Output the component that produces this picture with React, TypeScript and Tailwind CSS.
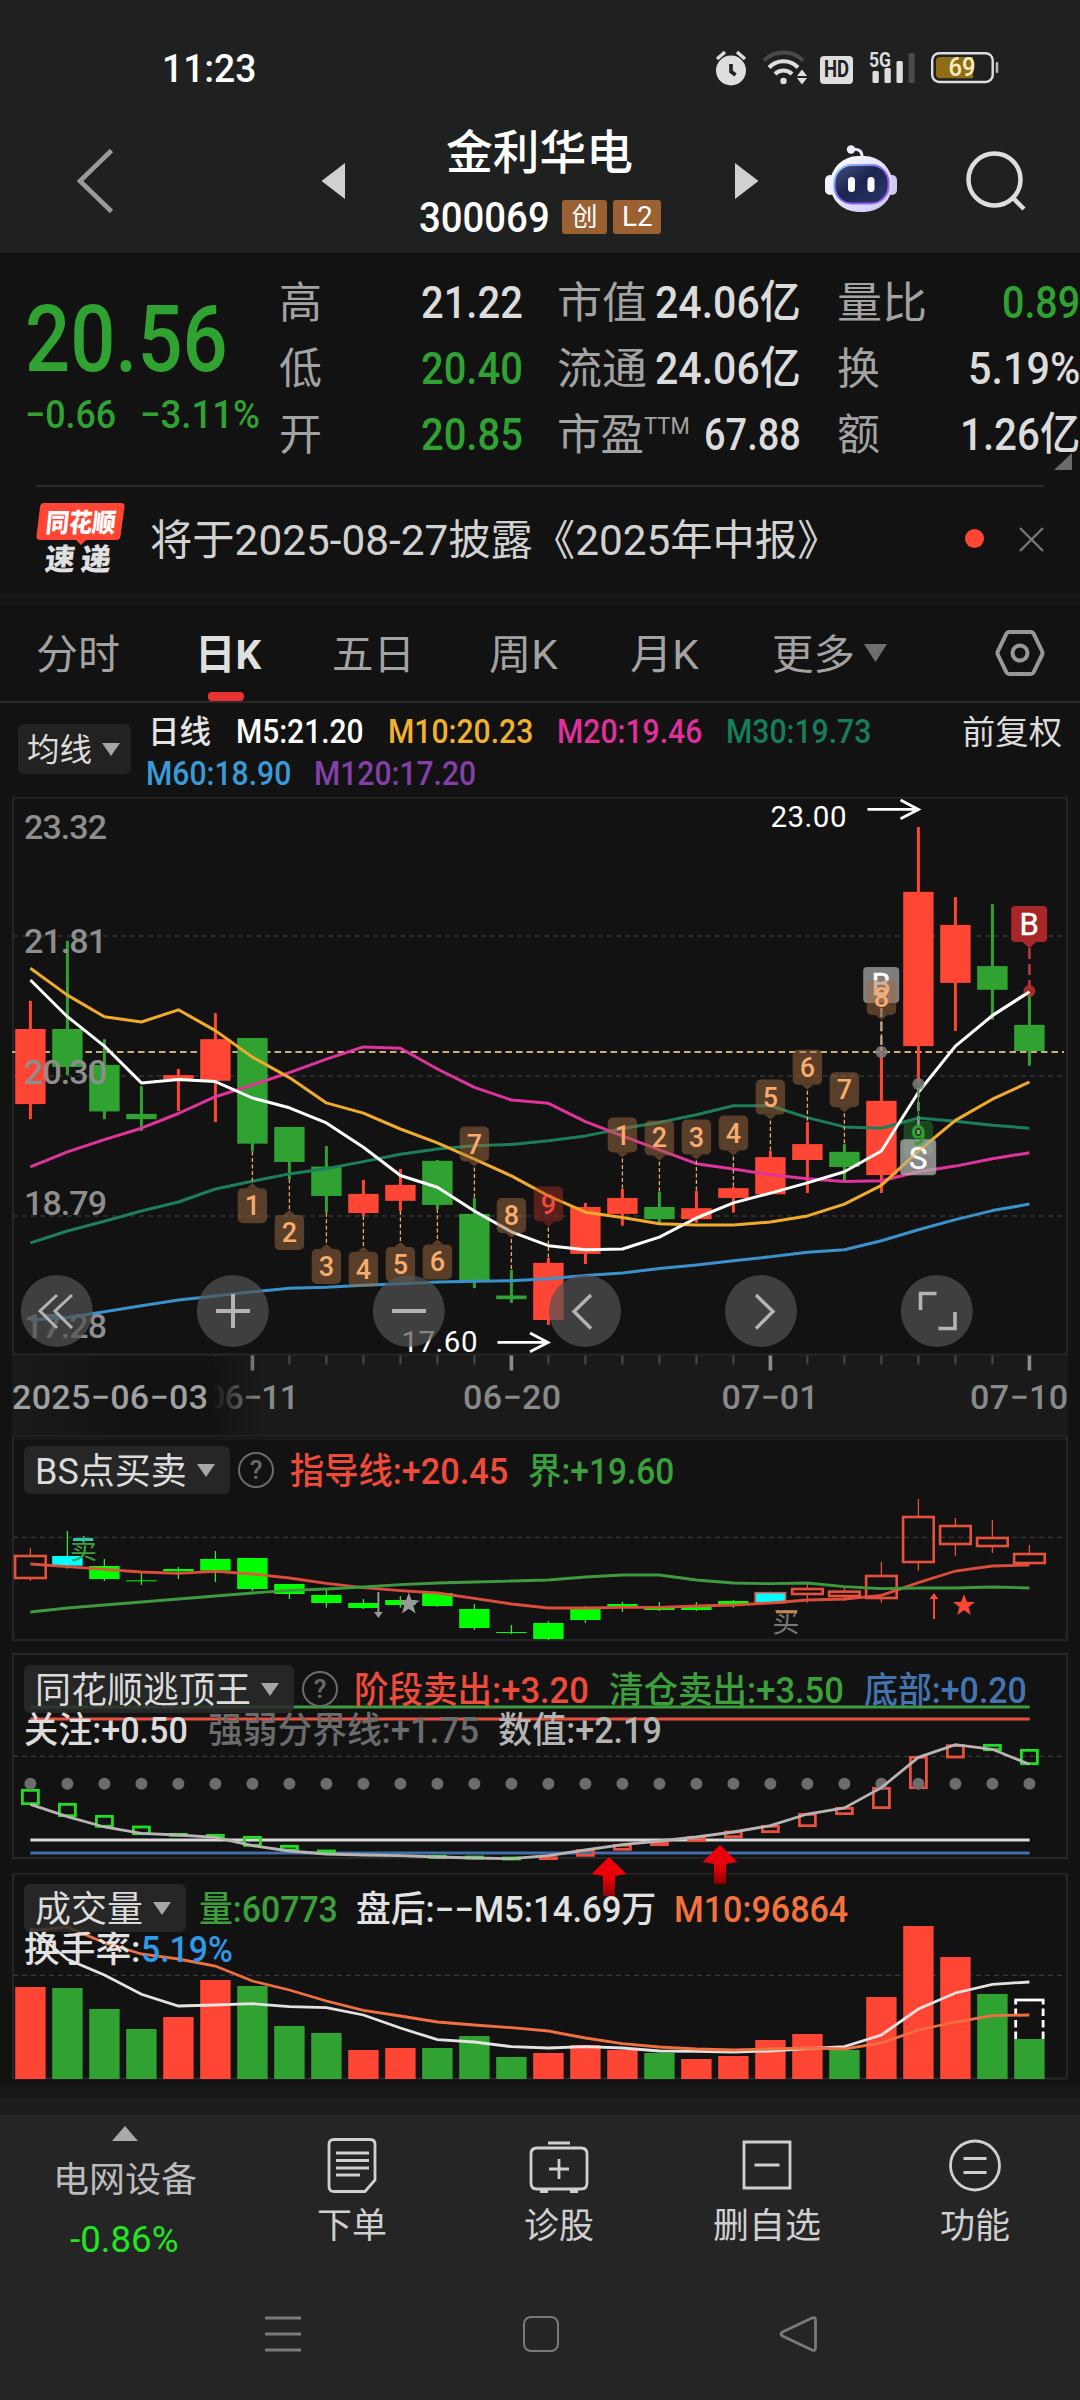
import { useLayoutEffect, useRef, useState, type ReactNode } from "react";

const RED = "#ff4634";
const GREEN = "#30a231";
const LIME = "#00ff00";

/* Text squeezed or stretched horizontally so that it fills the width of its box. */
function Fit({ className = "", children }: { className?: string; children: ReactNode }) {
  const outer = useRef<HTMLSpanElement>(null);
  const inner = useRef<HTMLSpanElement>(null);
  const [k, setK] = useState(1);
  useLayoutEffect(() => {
    if (outer.current && inner.current) setK(outer.current.offsetWidth / inner.current.offsetWidth);
  }, []);
  return (
    <span ref={outer} className={"block shrink-0 whitespace-nowrap " + className}>
      <span ref={inner} className="inline-block origin-left" style={{ transform: `scaleX(${k})` }}>
        {children}
      </span>
    </span>
  );
}

const cx = (i: number) => 30.4 + 37 * i;
const line = (ys: number[], f: (v: number) => number) => ys.map((v, i) => `${cx(i)},${f(v).toFixed(1)}`).join(" ");

/* ---------- header ---------- */

function StatusBar() {
  return (
    <div className="flex h-[86px] items-start pt-[50px] pl-[162px] text-white">
      <Fit className="w-[94px] text-[38px] leading-[38px] font-medium">11:23</Fit>
      <svg className="ml-[459px] h-[36px] w-[32px]" viewBox="715 51 32 36" fill="none">
        <circle cx="731" cy="71.5" r="15" fill="#dedede" />
        <path d="M717 60l8-7M745 60l-8-7" stroke="#dedede" strokeWidth="3.4" />
        <path d="M731 65v7.500l4.500 3.500" stroke="#1f2120" strokeWidth="3.600" />
      </svg>
      <svg className="ml-[15px] h-[36px] w-[46px]" viewBox="762 51 46 36" fill="none">
        <path d="M764 61.500a28 28 0 0 1 39 0" stroke="#484948" strokeWidth="4" />
        <path d="M769 68.500a20 20 0 0 1 29 0M775 75a12 12 0 0 1 17 0" stroke="#dedede" strokeWidth="4" />
        <circle cx="783.500" cy="82" r="3.200" fill="#dedede" />
        <path d="M802 70.500l5 6.500h-10zM802 85.500l5-6.500h-10z" fill="#dedede" />
      </svg>
      <span className="mt-[6px] ml-[12px] flex h-[28px] w-[33px] items-center justify-center rounded-[4px] bg-[#dedede] text-[#1f2120]">
        <Fit className="w-[25px] text-[23px] leading-[28px] font-bold">HD</Fit>
      </span>
      <svg className="ml-[15px] h-[36px] w-[48px] overflow-visible" viewBox="868 51 48 36">
        <text x="869" y="67.500" fontSize="21" fontWeight="700" fill="#dedede" textLength="22" lengthAdjust="spacingAndGlyphs">5G</text>
        <rect x="872.500" y="72" width="6.300" height="12" rx="1.500" fill="#dedede" />
        <rect x="884.500" y="69" width="6.300" height="15" rx="1.500" fill="#dedede" />
        <rect x="896.500" y="62" width="6.300" height="22" rx="1.500" fill="#dedede" />
        <rect x="908.500" y="54" width="6.300" height="30" rx="1.500" fill="#484948" />
      </svg>
      <svg className="ml-[14px] h-[36px] w-[70px]" viewBox="930 51 70 36" fill="none">
        <rect x="932.200" y="54.200" width="60.500" height="28.800" rx="7" stroke="#dedede" strokeWidth="2.400" />
        <path d="M940 58h33v21.300h-33a4 4 0 0 1-4-4v-13.300a4 4 0 0 1 4-4z" fill="#8f6d15" />
        <rect x="995.700" y="63" width="2.600" height="11" rx="1" fill="#b8b8b8" />
        <text x="948.500" y="77.300" fontSize="25" fontWeight="500" fill="#f7ecc4" textLength="27" lengthAdjust="spacingAndGlyphs">69</text>
      </svg>
    </div>
  );
}

function Robot() {
  return (
    <svg className="mt-[58px] h-[70px] w-[74px] overflow-visible" viewBox="824 143 74 70" fill="none">
      <defs>
        <linearGradient id="rb-shell" x1="0" y1="0" x2="1" y2="1">
          <stop offset="0" stopColor="#ffffff" />
          <stop offset="1" stopColor="#c9c5f2" />
        </linearGradient>
        <linearGradient id="rb-rim" x1="0" y1="0" x2="1" y2="1">
          <stop offset="0" stopColor="#8fe0ff" />
          <stop offset=".5" stopColor="#7a5cf0" />
          <stop offset="1" stopColor="#a060f0" />
        </linearGradient>
        <linearGradient id="rb-face" x1="0" y1="0" x2="1" y2="1">
          <stop offset="0" stopColor="#46507c" />
          <stop offset=".45" stopColor="#1c2550" />
          <stop offset="1" stopColor="#2c3668" />
        </linearGradient>
      </defs>
      <path d="M851 148.500q12-2 11 9" stroke="#e8e6fa" strokeWidth="3" />
      <circle cx="851" cy="148.500" r="4.200" fill="#eeedfb" />
      <rect x="825" y="174" width="10" height="20" rx="5" fill="#f3f2fd" />
      <rect x="887" y="174" width="10" height="20" rx="5" fill="#cfcbf0" />
      <rect x="830" y="155" width="62.500" height="56" rx="28" fill="url(#rb-shell)" />
      <rect x="834.500" y="164" width="54" height="38.500" rx="17.500" fill="url(#rb-face)" stroke="url(#rb-rim)" strokeWidth="2" />
      <rect x="848" y="176" width="7" height="15" rx="3.500" fill="#fff" />
      <rect x="867.500" y="176" width="7" height="15" rx="3.500" fill="#fff" />
    </svg>
  );
}

function TitleBar() {
  return (
    <div className="flex h-[167px] items-start">
      <svg className="mt-[62px] ml-[74px] h-[66px] w-[42px]" viewBox="74 148 42 66" fill="none">
        <path d="M111.500 150.500L80 181l31.500 30.500" stroke="#9a9a9a" strokeWidth="4.600" />
      </svg>
      <svg className="mt-[77px] ml-[205px] h-[36px] w-[24px]" viewBox="0 0 24 36">
        <path d="M24 0v36L.5 18z" fill="#d0d0d0" />
      </svg>
      <div className="ml-[74px] flex w-[243px] flex-col">
        <Fit className="mt-[41px] ml-[27px] w-[187px] text-[47px] leading-[52px] font-medium text-white">金利华电</Fit>
        <div className="mt-[16px] flex items-center">
          <Fit className="w-[131px] text-[43px] leading-[44px] font-medium text-white">300069</Fit>
          <span className="ml-[12px] flex h-[34px] w-[45px] items-center justify-center rounded-[3px] bg-[#9c6133] text-[26px] leading-[34px] text-white">创</span>
          <span className="ml-[6px] flex h-[34px] w-[48px] items-center justify-center rounded-[3px] bg-[#9c6133] text-white">
            <Fit className="w-[31px] text-[27px] leading-[34px]">L2</Fit>
          </span>
        </div>
      </div>
      <svg className="mt-[77px] ml-[73px] h-[36px] w-[24px]" viewBox="0 0 24 36">
        <path d="M0 0v36L23.500 18z" fill="#d0d0d0" />
      </svg>
      <div className="ml-[65px]">
        <Robot />
      </div>
      <svg className="mt-[62px] ml-[66px] h-[64px] w-[64px]" viewBox="964 148 64 64" fill="none" stroke="#dedede" strokeWidth="4.500">
        <circle cx="994.500" cy="179.500" r="26" />
        <path d="M1013 198l11 11" strokeWidth="4.500" />
      </svg>
    </div>
  );
}

/* ---------- quote ---------- */

function QuoteBlock() {
  const lab = "text-[43px] leading-[66px] text-[#a3a3a3]";
  const val = "text-[45px] leading-[66px] font-medium";
  return (
    <div className="flex h-[232px] items-start">
      <div className="w-[278px] pl-[25px] text-[#30a231]">
        <Fit className="mt-[46px] w-[203px] text-[92px] leading-[82px] font-medium">20.56</Fit>
        <div className="mt-[11px] flex">
          <Fit className="w-[91px] text-[39px] leading-[46px] font-medium">−0.66</Fit>
          <Fit className="ml-[24px] w-[120px] text-[39px] leading-[46px] font-medium">−3.11%</Fit>
        </div>
      </div>
      <div className="mt-[17px] flex w-[245px] justify-between">
        <div className={"flex flex-col pl-[1px] " + lab}>
          <span>高</span>
          <span>低</span>
          <span>开</span>
        </div>
        <div className={"flex flex-col " + val}>
          <Fit className="w-[102px] text-[#dcdcdc]">21.22</Fit>
          <Fit className="w-[102px] text-[#30a231]">20.40</Fit>
          <Fit className="w-[102px] text-[#30a231]">20.85</Fit>
        </div>
      </div>
      <div className="mt-[17px] ml-[34px] flex w-[244px] flex-col text-[#dcdcdc]">
        {["市值", "流通"].map((l) => (
          <div key={l} className="flex justify-between">
            <Fit className={"w-[90px] " + lab}>{l}</Fit>
            <Fit className={"w-[146px] " + val}>24.06亿</Fit>
          </div>
        ))}
        <div className="flex">
          <Fit className={"w-[87px] " + lab}>市盈</Fit>
          <Fit className="w-[46px] text-[23px] leading-[50px] text-[#a3a3a3]">TTM</Fit>
          <Fit className={"ml-[14px] w-[97px] " + val}>67.88</Fit>
        </div>
      </div>
      <div className="relative mt-[17px] ml-[36px] flex w-[243px] flex-col text-[#dcdcdc]">
        <div className="flex justify-between">
          <Fit className={"w-[90px] " + lab}>量比</Fit>
          <Fit className={"w-[78px] text-[#30a231] " + val}>0.89</Fit>
        </div>
        <div className="flex justify-between">
          <span className={lab}>换</span>
          <Fit className={"w-[112px] " + val}>5.19%</Fit>
        </div>
        <div className="flex justify-between">
          <span className={lab}>额</span>
          <Fit className={"w-[120px] " + val}>1.26亿</Fit>
        </div>
        <svg className="absolute top-[183px] left-[217px] h-[18px] w-[18px]" viewBox="0 0 18 18">
          <path d="M18 0v17H0z" fill="#6a6a6a" />
        </svg>
      </div>
    </div>
  );
}

function NewsRow() {
  return (
    <div className="mx-[36px] flex h-[108px] items-start border-t-2 border-[#2a2a2a]">
      <div className="mt-[16px] h-[74px] w-[90px]">
        <div className="relative h-[36px] w-[88px]">
          <svg className="absolute inset-0 h-[44px] w-[90px]" viewBox="0 0 90 44">
            <path d="M8 0h77q4 0 3.500 4l-4 29q-.5 4-4 4H50l-5 5-5-5H4q-4 0-3.500-4L4 4q.5-4 4-4z" fill="#ff4634" />
          </svg>
          <Fit className="relative ml-[10px] w-[70px] -skew-x-6 pt-[2px] text-[26px] leading-[36px] font-black text-white">同花顺</Fit>
        </div>
        <div className="mt-[6px] ml-[9px] flex -skew-x-6 gap-[6px] text-[30px] leading-[30px] font-black text-[#e0e0e0]">
          <span>速</span>
          <span>递</span>
        </div>
      </div>
      <Fit className="mt-[25px] ml-[24px] w-[689px] text-[42px] leading-[58px] text-[#d2d2d2]">将于2025-08-27披露《2025年中报》</Fit>
      <span className="mt-[42px] ml-[126px] size-[19px] rounded-full bg-[#ff4634]" />
      <svg className="mt-[40px] ml-[35px] size-[25px]" viewBox="0 0 25 25">
        <path d="M1 1l23 23M24 1L1 24" stroke="#777" strokeWidth="2.400" />
      </svg>
    </div>
  );
}

/* ---------- tabs and legend ---------- */

function Tabs() {
  return (
    <div className="flex h-[98px] border-b-2 border-[#2a2a2a] pt-[21px] text-[41px] leading-[58px] text-[#a3a3a3]">
      <Fit className="ml-[36px] w-[84px]">分时</Fit>
      <div className="relative ml-[75px] w-[68px]">
        <Fit className="w-[66px] font-bold text-[#e0e0e0]">日K</Fit>
        <span className="absolute top-[66px] left-[13px] h-[9px] w-[36px] rounded-[4px] bg-[#e73232]" />
      </div>
      <Fit className="ml-[69px] w-[83px]">五日</Fit>
      <Fit className="ml-[74px] w-[69px]">周K</Fit>
      <Fit className="ml-[72px] w-[69px]">月K</Fit>
      <Fit className="ml-[73px] w-[83px]">更多</Fit>
      <svg className="mt-[18px] ml-[9px] h-[18px] w-[23px]" viewBox="0 0 23 18">
        <path d="M0 0h23L11.500 18z" fill="#6e6e6e" />
      </svg>
      <svg className="mt-[2px] ml-[108px] h-[50px] w-[50px]" viewBox="0 0 50 50" fill="none" stroke="#989898" strokeWidth="4">
        <path d="M14.500 4h21q2 0 3 1.500L47 23q1 2 0 4l-8.500 17.500q-1 1.500-3 1.500h-21q-2 0-3-1.500L3 27q-1-2 0-4l8.500-17.500q1-1.500 3-1.500z" />
        <circle cx="25" cy="25" r="7.500" />
      </svg>
    </div>
  );
}

function Caret({ className = "" }: { className?: string }) {
  return (
    <svg className={"h-[13px] w-[18px] shrink-0 " + className} viewBox="0 0 18 13">
      <path d="M0 0h18L9 13z" fill="#a6a6a6" />
    </svg>
  );
}

function Legend() {
  return (
    <div className="flex h-[94px] text-[33px] leading-[42px] font-medium">
      <div className="mt-[21px] ml-[18px] flex h-[50px] w-[113px] items-center rounded-[6px] bg-[#222222]">
        <Fit className="ml-[9px] w-[65px] translate-y-px text-[32px] leading-[50px] font-normal text-[#dcdcdc]">均线</Fit>
        <Caret className="ml-[10px]" />
      </div>
      <div className="mt-[8px] ml-[15px] w-[818px]">
        <div className="flex">
          <Fit className="ml-[2px] w-[63px] text-[32px] text-[#e4e4e4]">日线</Fit>
          <Fit className="ml-[25px] w-[128px] text-white">M5:21.20</Fit>
          <Fit className="ml-[24px] w-[145px] text-[#f2b02f]">M10:20.23</Fit>
          <Fit className="ml-[24px] w-[145px] text-[#e0309c]">M20:19.46</Fit>
          <Fit className="ml-[24px] w-[145px] text-[#157f5a]">M30:19.73</Fit>
        </div>
        <div className="flex">
          <Fit className="w-[145px] text-[#3a9bd8]">M60:18.90</Fit>
          <Fit className="ml-[23px] w-[162px] text-[#8440a8]">M120:17.20</Fit>
        </div>
      </div>
      <Fit className="mt-[9px] ml-[-2px] w-[100px] text-[33px] font-normal text-[#dcdcdc]">前复权</Fit>
    </div>
  );
}

/* ---------- main candle chart ---------- */

const ky = (v: number) => 780 + v / 2.45;

const candles: [string, number, number, number, number][] = [
  ["R", 541, 610, 794, 831], ["G", 394, 610, 703, 723], ["G", 635, 698, 812, 831], ["G", 750, 818, 831, 860],
  ["R", 708, 723, 733, 811], ["R", 571, 635, 737, 838], ["G", 632, 632, 891, 910], ["G", 850, 850, 936, 978],
  ["G", 897, 947, 1019, 1060], ["R", 980, 1014, 1061, 1068], ["R", 953, 992, 1031, 1056], ["G", 931, 933, 1041, 1051],
  ["G", 1024, 1063, 1225, 1245], ["G", 1200, 1263, 1272, 1281], ["R", 1171, 1183, 1323, 1335], ["R", 1036, 1046, 1161, 1186],
  ["R", 1002, 1024, 1063, 1092], ["G", 1009, 1046, 1076, 1088], ["R", 1007, 1049, 1076, 1085], ["R", 997, 1000, 1024, 1060],
  ["R", 909, 924, 1015, 1015], ["R", 838, 892, 931, 1012], ["G", 892, 911, 948, 980], ["R", 666, 786, 968, 1012],
  ["R", 115, 274, 652, 745], ["R", 287, 355, 497, 615], ["G", 304, 456, 514, 587], ["G", 519, 600, 664, 700],
];

const averages: [string, number[]][] = [
  ["#3a92cc", [1323, 1317, 1303, 1288, 1274, 1264, 1254, 1245, 1243, 1238, 1234, 1230, 1228, 1227, 1222, 1214, 1208, 1197, 1188, 1178, 1168, 1157, 1151, 1129, 1102, 1077, 1055, 1039]],
  ["#1b7f5c", [1134, 1105, 1081, 1056, 1034, 1002, 983, 965, 952, 935, 917, 904, 896, 893, 884, 872, 854, 839, 820, 798, 798, 827, 850, 853, 828, 836, 846, 853]],
  ["#e0339c", [948, 911, 881, 853, 817, 776, 747, 717, 684, 654, 657, 708, 753, 784, 792, 837, 872, 906, 940, 953, 967, 977, 984, 982, 960, 946, 928, 913]],
  ["#f0ab2a", [461, 527, 580, 593, 563, 614, 679, 729, 791, 816, 855, 889, 929, 970, 1019, 1059, 1072, 1087, 1090, 1090, 1083, 1068, 1039, 993, 909, 834, 782, 740]],
  ["#ffffff", [490, 580, 652, 742, 734, 739, 779, 803, 840, 900, 969, 998, 1056, 1107, 1141, 1151, 1149, 1120, 1073, 1036, 1012, 987, 960, 909, 765, 652, 577, 519]],
];

/* [index, label, top of the tag, tag sits below its candle] */
const tags: [number, string, number, boolean][] = [
  [6, "1", 1000, true], [7, "2", 1066, true], [8, "3", 1149, true], [9, "4", 1156, true], [10, "5", 1144, true], [11, "6", 1138, true],
  [12, "7", 849, false], [13, "8", 1024, false], [14, "9", 996, false], [16, "1", 827, false], [17, "2", 834, false], [18, "3", 832, false],
  [19, "4", 822, false], [20, "5", 734, false], [21, "6", 661, false], [22, "7", 716, false],
];

function Tag({ i, label, top, below }: { i: number; label: string; top: number; below: boolean }) {
  const y = ky(top);
  const x = cx(i);
  const red = i === 14;
  const [, hi, , , lo] = candles[i];
  const tip = below ? `M${x - 6} ${y}l6-5 6 5z` : `M${x - 6} ${y + 35}l6 5 6-5z`;
  return (
    <g>
      <line x1={x} x2={x} y1={below ? ky(lo) : y + 41} y2={below ? y - 5 : ky(hi)} stroke="#f0a868" strokeWidth="1.300" strokeDasharray="4 2.500" />
      <g fill={red ? "#a02c22" : "#a06a40"} opacity=".5">
        <rect x={x - 14.700} y={y} width="29.400" height="35" rx="5" />
        <path d={tip} />
      </g>
      <text x={x} y={y + 27} fontSize="27" fontWeight="500" textAnchor="middle" fill={red ? "#f2483a" : "#faac6c"}>{label}</text>
    </g>
  );
}

function Flag({ i, label, top, base, fill, opacity }: { i: number; label: string; top: number; base: number; fill: string; opacity: number }) {
  const x = cx(i) - 0.2;
  const y = ky(top);
  return (
    <g>
      <rect x={x - 18} y={y} width="36" height="36" rx="4" fill={fill} opacity={opacity} />
      <text x={x} y={y + base} fontSize="31" textAnchor="middle" fill="#fff" stroke="#fff" strokeWidth=".4">{label}</text>
    </g>
  );
}

function MainChart() {
  const bigTick = [6, 13, 20, 27];
  return (
    <svg className="block h-[638px] w-[1080px]" viewBox="0 797 1080 638" fill="none">
      <defs>
        <linearGradient id="date-fade" x1="0" x2="1" y1="0" y2="0">
          <stop offset="0" stopColor="#1a1a1a" />
          <stop offset=".45" stopColor="#121212" />
          <stop offset=".8" stopColor="#121212" />
          <stop offset="1" stopColor="#121212" stopOpacity="0" />
        </linearGradient>
      </defs>
      <rect x="12" y="1355" width="1056" height="80" fill="#1a1a1a" />
      <rect x="13" y="797.500" width="1054" height="557" stroke="#262626" strokeWidth="2" />
      {[936, 1076, 1216].map((y) => (
        <line key={y} x1="13" x2="1066" y1={y} y2={y} stroke="#2b2b2b" strokeWidth="2" strokeDasharray="5 4" />
      ))}
      <line x1="12" x2="1064" y1="1052" y2="1052" stroke="#d0ae7c" strokeWidth="2" strokeDasharray="6.500 4" />

      {candles.map(([c, hi, t, b, lo], i) => (
        <g key={i} fill={c === "R" ? RED : GREEN}>
          <rect x={cx(i) - 1.500} y={ky(hi)} width="3" height={ky(lo) - ky(hi)} />
          <rect x={cx(i) - 15.200} y={ky(t)} width="30.400" height={Math.max(3, ky(b) - ky(t))} />
        </g>
      ))}

      <g fontSize="34" fontWeight="500" fill="#8e8e8e">
        {([["23.32", 839], ["21.81", 953], ["20.30", 1084], ["18.79", 1215], ["17.28", 1338]] as [string, number][]).map(([s, y]) => (
          <text key={s} x="24" y={y} textLength="83">{s}</text>
        ))}
      </g>

      {averages.map(([c, ys]) => (
        <polyline key={c} points={line(ys, ky)} stroke={c} strokeWidth="3" strokeLinejoin="round" />
      ))}

      {tags.map(([i, l, t, b]) => (
        <Tag key={i} i={i} label={l} top={t} below={b} />
      ))}

      <g fill="#7d7d7d">
        <circle cx={cx(23)} cy="1052" r="6" opacity=".85" />
        <circle cx={cx(24)} cy="1084" r="6" opacity=".85" />
      </g>
      <line x1={cx(23)} x2={cx(23)} y1="1008" y2="1048" stroke="#9c9c9c" strokeWidth="2.500" strokeDasharray="9 5" />
      <Flag i={23} label="B" top={458} base={28.5} fill="#9a9a9a" opacity={0.8} />
      <Tag i={23} label="8" top={490} below={false} />

      <rect x={cx(24) - 14.700} y="1121" width="29.400" height="35" rx="5" fill="#2a9a32" opacity=".4" />
      <line x1={cx(24)} x2={cx(24)} y1="1088" y2="1134" stroke="#9c9c9c" strokeWidth="2.500" strokeDasharray="9 5" />
      <line x1={cx(24)} x2={cx(24)} y1="1086" y2="1120" stroke="#30a231" strokeWidth="1.300" />
      <Flag i={24} label="S" top={880} base={29.5} fill="#b0b0b0" opacity={0.75} />
      <text x={cx(24)} y="1145" fontSize="27" fontWeight="500" textAnchor="middle" fill="#30a231">9</text>
      <polyline points={line(averages[3][1], ky)} stroke="#f0ab2a" strokeWidth="2" opacity=".5" />

      <line x1={cx(27)} x2={cx(27)} y1="948" y2="988" stroke="#c0393a" strokeWidth="2.500" strokeDasharray="11 5" />
      <circle cx={cx(27)} cy="991" r="6" fill="#c0302f" opacity=".85" />
      <path d={`M${cx(27) - 7} 942l7 6 7-6z`} fill="#a82628" />
      <Flag i={27} label="B" top={309} base={29} fill="#a82628" opacity={1} />
      <path d={`M${cx(26)} ${ky(577)}L${cx(27)} ${ky(519)}`} stroke="#fff" strokeWidth="2.800" />

      <g fill="#fff" fontSize="29.500">
        <text x="770.500" y="826.500" textLength="76">23.00</text>
        <text x="401.500" y="1352" textLength="76">17.60</text>
      </g>
      <path d="M867.500 809.400H917M900.500 800l18 9.400-18 9.400M497.500 1342.400H547M530 1333l18 9.400-18 9.400" stroke="#fff" strokeWidth="2.800" />

      <g fill="#525252" opacity=".7">
        {[56.8, 232.8, 408.8, 585, 761, 936.8].map((x) => (
          <circle key={x} cx={x} cy="1311" r="36" />
        ))}
      </g>
      <g stroke="#b4b4b4" strokeWidth="3">
        <path d="M57 1295l-17 16 17 17M72 1295l-17 16 17 17" />
        <path d="M216 1311h34M233 1294v34" strokeWidth="4" />
        <path d="M392 1311h34" strokeWidth="4" />
        <path d="M591 1295l-17 16.500 17 17M756 1295l17 16.500-17 17" strokeWidth="3.400" />
        <path d="M920.500 1310v-16.500h16M955 1312v16.500h-16.500" strokeWidth="3.600" />
      </g>

      {Array.from({ length: 23 }, (_, n) => n + 5).map((i) => (
        <rect key={i} x={cx(i) - (bigTick.includes(i) ? 1.800 : 1)} y="1355.500" width={bigTick.includes(i) ? 3.600 : 2} height={bigTick.includes(i) ? 15 : 9} fill={bigTick.includes(i) ? "#8c8c8c" : "#4a4a4a"} />
      ))}
      <g fontSize="34" fontWeight="500" fill="#8a8a8a">
        <text x="206" y="1408.500" textLength="93">06−11</text>
        <text x="463" y="1408.500" textLength="98">06−20</text>
        <text x="721.500" y="1408.500" textLength="97">07−01</text>
        <text x="970" y="1408.500" textLength="98">07−10</text>
      </g>
      <rect x="12" y="1356" width="250" height="79" fill="url(#date-fade)" />
      <text x="12" y="1408.500" fontSize="34" fontWeight="500" fill="#a0a0a0" textLength="196">2025−06−03</text>
    </svg>
  );
}

/* ---------- indicator panels ---------- */

const sy = (v: number) => 1420 + v / 3;
const vy = (v: number) => 1860 + v / 3;

function Selector({ width, children }: { width: string; children: ReactNode }) {
  return (
    <div className={"flex h-[48px] shrink-0 items-center rounded-[6px] bg-[#2a2a2a]/85 pr-[15px] pl-[11px] text-[#dcdcdc] " + width}>
      {children}
      <Caret className="ml-auto" />
    </div>
  );
}

function Help() {
  return (
    <span className="ml-[8px] flex size-[36px] shrink-0 items-center justify-center rounded-full border-[2.5px] border-[#6b6b6b] text-[26px] leading-none text-[#6b6b6b]">?</span>
  );
}

function Frame({ y, h, mid }: { y: number; h: number; mid: number }) {
  return (
    <>
      <rect x="13" y={y} width="1054" height={h} stroke="#262626" strokeWidth="2" />
      <line x1="13" x2="1066" y1={mid} y2={mid} stroke="#3a3a3a" strokeWidth="1.200" strokeDasharray="5 4" />
    </>
  );
}

/* H hollow red, C cyan, G lime, E cyan with a red edge */
const bsCandles: [string, number, number, number, number][] = [
  ["H", 384, 405, 474, 483], ["C", 333, 408, 437, 446], ["G", 417, 438, 477, 483], ["G", 459, 481, 484, 495],
  ["G", 441, 447, 454, 477], ["G", 393, 417, 452, 486], ["G", 414, 414, 507, 513], ["G", 492, 492, 522, 537],
  ["G", 510, 525, 549, 563], ["G", 537, 549, 564, 567], ["G", 528, 540, 555, 563], ["G", 519, 519, 558, 561],
  ["G", 552, 567, 624, 630], ["G", 615, 636, 639, 642], ["G", 603, 609, 657, 660], ["G", 558, 567, 600, 609],
  ["G", 545, 552, 560, 576], ["G", 546, 563, 570, 573], ["G", 546, 561, 570, 573], ["G", 540, 543, 552, 563],
  ["E", 515, 515, 548, 548], ["H", 492, 504, 522, 548], ["H", 505, 512, 528, 543], ["H", 426, 465, 534, 548],
  ["H", 237, 288, 426, 452], ["H", 294, 315, 372, 407], ["H", 300, 351, 378, 399], ["H", 375, 399, 429, 429],
];
const guide = [432, 440, 448, 456, 460, 454, 462, 474, 490, 503, 512, 519, 535, 552, 564, 564, 562, 562, 558, 555, 549, 540, 537, 526, 488, 453, 438, 435];
const border = [576, 564, 555, 546, 537, 528, 519, 511, 507, 501, 494, 489, 486, 483, 480, 471, 465, 465, 480, 489, 491, 489, 500, 506, 504, 504, 501, 504];
const STAR = "M0-11.500L2.800-3.700 11-3.600 4.500 1.500 6.800 9.500 0 4.800-6.800 9.500-4.500 1.500-11-3.600-2.800-3.700z";

function BsPanel() {
  return (
    <div className="relative h-[219px] pt-[11px]">
      <svg className="absolute inset-0 h-[219px] w-[1080px]" viewBox="0 1435 1080 219" fill="none">
        <rect x="12" y="1435" width="1056" height="5" fill="#191919" />
        <Frame y={1435} h={205} mid={1537.3} />
        {bsCandles.map(([c, hi, t, b, lo], i) => {
          const hollow = c === "H";
          return (
            <g key={i}>
              <path
                d={hollow ? `M${cx(i)} ${sy(hi)}V${sy(t)}M${cx(i)} ${sy(b)}V${sy(lo)}` : `M${cx(i)} ${sy(hi)}V${sy(lo)}`}
                stroke={hollow ? "#e8503e" : "#3fe03f"}
                strokeWidth="1.300"
              />
              {hollow || c === "E" ? (
                <rect x={cx(i) - 15.300} y={sy(t) + 1} width="30.600" height={(b - t) / 3 - 1} fill={hollow ? "none" : "#00ffff"} stroke="#e8503e" strokeWidth={hollow ? 2.600 : 1.500} />
              ) : (
                <rect x={cx(i) - 15.200} y={sy(t)} width="30.400" height={(b - t) / 3} fill={c === "C" ? "#00ffff" : LIME} />
              )}
            </g>
          );
        })}
        <polyline points={line(guide, sy)} stroke="#e8503e" strokeWidth="2.800" opacity=".95" />
        <polyline points={line(border, sy)} stroke="#3f9a3f" strokeWidth="2.800" />
        <text x="70" y="1559" fontSize="27" fill="#3f9f3f">卖</text>
        <path d="M73 1539.500h20" stroke="#27c7b0" strokeWidth="3" />
        <g stroke="#999" strokeWidth="2">
          <path d="M378.400 1592v22" />
          <path d="M374 1612l4.400 6 4.400-6z" fill="#999" strokeWidth="0" />
        </g>
        <path d={STAR} transform="translate(408.800 1604)" fill="#999" />
        <text x="772.500" y="1632" fontSize="27" fill="#777">买</text>
        <path d="M776 1612h21" stroke="#c98840" strokeWidth="2.600" />
        <path d="M934 1619v-22" stroke={RED} strokeWidth="2" />
        <path d="M929.600 1599l4.400-6 4.400 6z" fill={RED} />
        <path d={STAR} transform="translate(964 1605.500)" fill={RED} />
      </svg>
      <div className="relative flex items-center pl-[24px] text-[36px] leading-[48px] font-medium">
        <Selector width="w-[206px]">
          <Fit className="w-[152px] translate-y-[1.5px] font-normal">BS点买卖</Fit>
        </Selector>
        <Help />
        <Fit className="ml-[16px] w-[218px] translate-y-[1.5px] text-[#f04b3a]">指导线:+20.45</Fit>
        <Fit className="ml-[20px] w-[146px] translate-y-[1.5px] text-[#3ba03a]">界:+19.60</Fit>
      </div>
    </div>
  );
}

const topCurve = [1153, 1190, 1221, 1240, 1245, 1252, 1277, 1293, 1302, 1305, 1307, 1311, 1314, 1316, 1307, 1290, 1274, 1263, 1251, 1236, 1217, 1182, 1164, 1103, 1012, 974, 988, 1033];
/* [index, top, bottom, rising] */
const topBoxes: [number, number, number, boolean][] = [
  [0, 1108, 1154, false], [1, 1150, 1190, false], [2, 1186, 1222, false], [3, 1218, 1244, false], [4, 1240, 1247, false], [5, 1243, 1252, false],
  [6, 1249, 1279, false], [7, 1276, 1293, false], [8, 1290, 1302, false], [11, 1306, 1312, false], [12, 1308, 1315, false], [13, 1311, 1316, false],
  [14, 1310, 1318, true], [15, 1289, 1309, true], [16, 1273, 1291, true], [17, 1264, 1277, true], [18, 1249, 1265, true], [19, 1233, 1253, true],
  [20, 1216, 1238, true], [21, 1180, 1220, true], [22, 1162, 1184, true], [23, 1102, 1166, true], [24, 1009, 1106, true], [25, 974, 1014, true],
  [26, 973, 992, false], [27, 988, 1034, false],
];

function TopPanel() {
  return (
    <div className="relative z-10 h-[219px] pt-[11px]">
      <svg className="absolute inset-0 h-[219px] w-[1080px] overflow-visible" viewBox="0 1654 1080 219" fill="none">
        <defs>
          <linearGradient id="buy-arrow" x1="0" x2="0" y1="0" y2="1">
            <stop offset="0" stopColor="#f00008" />
            <stop offset=".55" stopColor="#e80008" />
            <stop offset="1" stopColor="#900000" />
          </linearGradient>
        </defs>
        <Frame y={1654} h={204} mid={1756.3} />
        <g strokeWidth="3.200">
          <path d="M30.400 1707H1029.700" stroke="#3f9a3f" />
          <path d="M30.400 1719H1029.700" stroke="#e8503e" />
          <path d="M30.400 1840H1029.700" stroke="#d8d8d8" />
          <path d="M30.400 1853H1029.700" stroke="#3f6ea8" />
        </g>
        {topBoxes.map(([i, t, b, up]) => (
          <rect key={i} x={cx(i) - 8} y={sy(t) + 1} width="16" height={Math.max(1, (b - t) / 3 - 2)} stroke={up ? "#e8503e" : "#22dd22"} strokeWidth="2.800" />
        ))}
        {topCurve.map((_, i) => (
          <circle key={i} cx={cx(i)} cy="1783.700" r="6" fill="#6c6c6c" />
        ))}
        <polyline points={line(topCurve, sy)} stroke="#b8b4b4" strokeWidth="2.800" />
        {[[609, 1857], [720, 1845]].map(([x, y]) => (
          <path key={x} d={`M${x} ${y}l17.500 17-11.500 2v20h-12v-20L${x - 17.5} ${y + 17}z`} fill="url(#buy-arrow)" />
        ))}
      </svg>
      <div className="relative flex items-center pl-[24px] text-[36px] leading-[48px] font-medium">
        <Selector width="w-[270px]">
          <Fit className="w-[216px] translate-y-[1.5px] font-normal">同花顺逃顶王</Fit>
        </Selector>
        <Help />
        <Fit className="ml-[16px] w-[235px] translate-y-[1.5px] text-[#f04b3a]">阶段卖出:+3.20</Fit>
        <Fit className="ml-[20px] w-[235px] translate-y-[1.5px] text-[#3ba03a]">清仓卖出:+3.50</Fit>
        <Fit className="ml-[20px] w-[163px] translate-y-[1.5px] text-[#4474b0]">底部:+0.20</Fit>
      </div>
      <div className="relative -mt-[6px] flex pl-[24px] text-[36px] leading-[48px] font-medium">
        <Fit className="w-[164px] text-[#dcdcdc]">关注:+0.50</Fit>
        <Fit className="ml-[20px] w-[271px] text-[#6b6b6b]">强弱分界线:+1.75</Fit>
        <Fit className="ml-[19px] w-[164px] text-[#b4b4b4]">数值:+2.19</Fit>
      </div>
    </div>
  );
}

const volume: [number, string][] = [
  [381, "R"], [384, "G"], [447, "G"], [507, "G"], [471, "R"], [360, "R"], [378, "G"], [498, "G"], [519, "G"], [570, "R"],
  [564, "R"], [564, "G"], [528, "G"], [591, "G"], [579, "R"], [555, "R"], [570, "R"], [579, "G"], [597, "R"], [588, "R"],
  [540, "R"], [522, "R"], [570, "G"], [411, "R"], [198, "R"], [291, "R"], [402, "G"], [537, "G"],
];
const vol5 = [205, 298, 345, 403, 438, 435, 431, 440, 443, 465, 504, 539, 546, 560, 564, 560, 564, 573, 574, 576, 573, 566, 560, 525, 447, 399, 373, 366];
const vol10 = [212, 201, 248, 282, 297, 318, 363, 390, 423, 451, 468, 486, 495, 503, 513, 534, 551, 561, 567, 570, 567, 564, 567, 549, 510, 486, 467, 465];

function VolumePanel() {
  return (
    <div className="relative h-[213px] pt-[11px]">
      <svg className="absolute inset-0 h-[213px] w-[1080px]" viewBox="0 1873 1080 213" fill="none">
        <Frame y={1873.5} h={205} mid={1975.3} />
        {volume.map(([t, c], i) => (
          <rect key={i} x={cx(i) - 15.200} y={vy(t)} width="30.400" height={(657 - t) / 3} fill={c === "R" ? RED : GREEN} />
        ))}
        <path d={`M${cx(27) - 13.7} 2039v-39M${cx(27) + 13.7} 2039v-39`} stroke="#fff" strokeWidth="2.800" strokeDasharray="7.500 4" />
        <path d={`M${cx(27) - 15} 2000h30`} stroke="#fff" strokeWidth="2.800" />
        <polyline points={line(vol5, vy)} stroke="#e6e2e2" strokeWidth="2.800" />
        <polyline points={line(vol10, vy)} stroke="#f07040" strokeWidth="2.800" />
      </svg>
      <div className="relative z-20 flex items-center pl-[24px] text-[36px] leading-[48px] font-medium">
        <Selector width="w-[162px]">
          <Fit className="w-[108px] translate-y-[1.5px] font-normal">成交量</Fit>
        </Selector>
        <Fit className="ml-[13px] w-[139px] translate-y-[1.5px] text-[#3ba03a]">量:60773</Fit>
        <Fit className="ml-[18px] w-[300px] translate-y-[1.5px] text-[#e2e2e2]">盘后:−−M5:14.69万</Fit>
        <Fit className="ml-[18px] w-[174px] translate-y-[1.5px] text-[#f5723c]">M10:96864</Fit>
      </div>
      <div className="relative -mt-[6px] flex pl-[24px] text-[36px] leading-[48px] font-medium">
        <Fit className="w-[117px] text-[#e2e2e2]">换手率:</Fit>
        <Fit className="w-[92px] text-[#2f9ae6]">5.19%</Fit>
      </div>
    </div>
  );
}

/* ---------- bottom ---------- */

function BottomBar() {
  const label = "mt-[10px] text-[35px] leading-[44px] text-[#d0d0d0]";
  return (
    <div className="flex h-[165px] bg-[#252525]">
      <div className="flex w-[250px] flex-col items-center pt-[11px]">
        <svg className="h-[15px] w-[26px]" viewBox="0 0 26 15">
          <path d="M13 0l13 15H0z" fill="#aaaaaa" />
        </svg>
        <Fit className="mt-[16px] -ml-[1px] w-[144px] text-[35px] leading-[48px] text-[#bcbcbc]">电网设备</Fit>
        <Fit className="mt-[11px] -ml-[2px] w-[109px] text-[36px] leading-[48px] text-[#22e622]">-0.86%</Fit>
      </div>
      <div className="flex w-[204px] flex-col items-center pt-[22px]">
        <svg className="h-[58px] w-[52px]" viewBox="0 0 52 58" fill="none" stroke="#d0d0d0" strokeWidth="2.800">
          <path d="M8 2.500h36q5 0 5 5V43L39 54.500H8q-5 0-5-5v-42q0-5 5-5z" />
          <path d="M10 16h33M10 23.500h33M10 31h33M10 38h24" strokeWidth="3" />
        </svg>
        <span className={label}>下单</span>
      </div>
      <div className="flex w-[210px] flex-col items-center pt-[22px]">
        <svg className="h-[58px] w-[60px]" viewBox="0 0 60 58" fill="none" stroke="#d0d0d0" strokeWidth="2.800">
          <path d="M8 11h44q6 0 6 6v29q0 6-6 6H8q-6 0-6-6V17q0-6 6-6z" />
          <path d="M19 6h22M11 54.500h8M41 54.500h8M20 32h20M30 22v20" />
        </svg>
        <span className={label}>诊股</span>
      </div>
      <div className="flex w-[206px] flex-col items-center pt-[22px]">
        <svg className="h-[58px] w-[52px]" viewBox="0 0 52 58" fill="none" stroke="#d0d0d0" strokeWidth="2.800">
          <path d="M3 5h46v46H3zM13.500 28h25" />
        </svg>
        <Fit className={"w-[108px] " + label}>删自选</Fit>
      </div>
      <div className="flex w-[210px] flex-col items-center pt-[22px]">
        <svg className="h-[58px] w-[54px]" viewBox="0 0 54 58" fill="none" stroke="#d0d0d0" strokeWidth="2.800">
          <circle cx="27" cy="28.500" r="24.500" />
          <path d="M15.500 21.500h23M15.500 35.500h23" />
        </svg>
        <span className={label}>功能</span>
      </div>
    </div>
  );
}

function SystemNav() {
  return (
    <div className="flex h-[120px] items-start bg-[#252525] pt-[35px] pl-[265px]">
      <svg className="h-[38px] w-[36px]" viewBox="0 0 36 38" stroke="#7a7a7a" strokeWidth="2.800">
        <path d="M0 3h36M0 19h36M0 35h36" />
      </svg>
      <span className="mt-[1px] ml-[222px] size-[36px] rounded-[8px] border-[2.6px] border-[#7a7a7a]" />
      <svg className="ml-[220px] h-[38px] w-[38px]" viewBox="0 0 38 38" fill="none" stroke="#7a7a7a" strokeWidth="2.800" strokeLinejoin="round">
        <path d="M33 3Q36.500 1.500 36.500 5v28q0 3.500-3.500 2L3.500 21q-3-2 0-4z" />
      </svg>
    </div>
  );
}

export default function App() {
  return (
    <div className="h-[2400px] w-[1080px] overflow-hidden bg-[#121212] font-['Roboto','Noto_Sans_CJK_SC',sans-serif]">
      <div className="bg-[#1f2120]">
        <StatusBar />
        <TitleBar />
      </div>
      <QuoteBlock />
      <NewsRow />
      <div className="h-[12px] bg-[#161616]" />
      <Tabs />
      <Legend />
      <MainChart />
      <BsPanel />
      <TopPanel />
      <VolumePanel />
      <div className="h-[12px] bg-[#171717]" />
      <div className="h-[17px] bg-[#1d1d1d]" />
      <BottomBar />
      <SystemNav />
    </div>
  );
}
